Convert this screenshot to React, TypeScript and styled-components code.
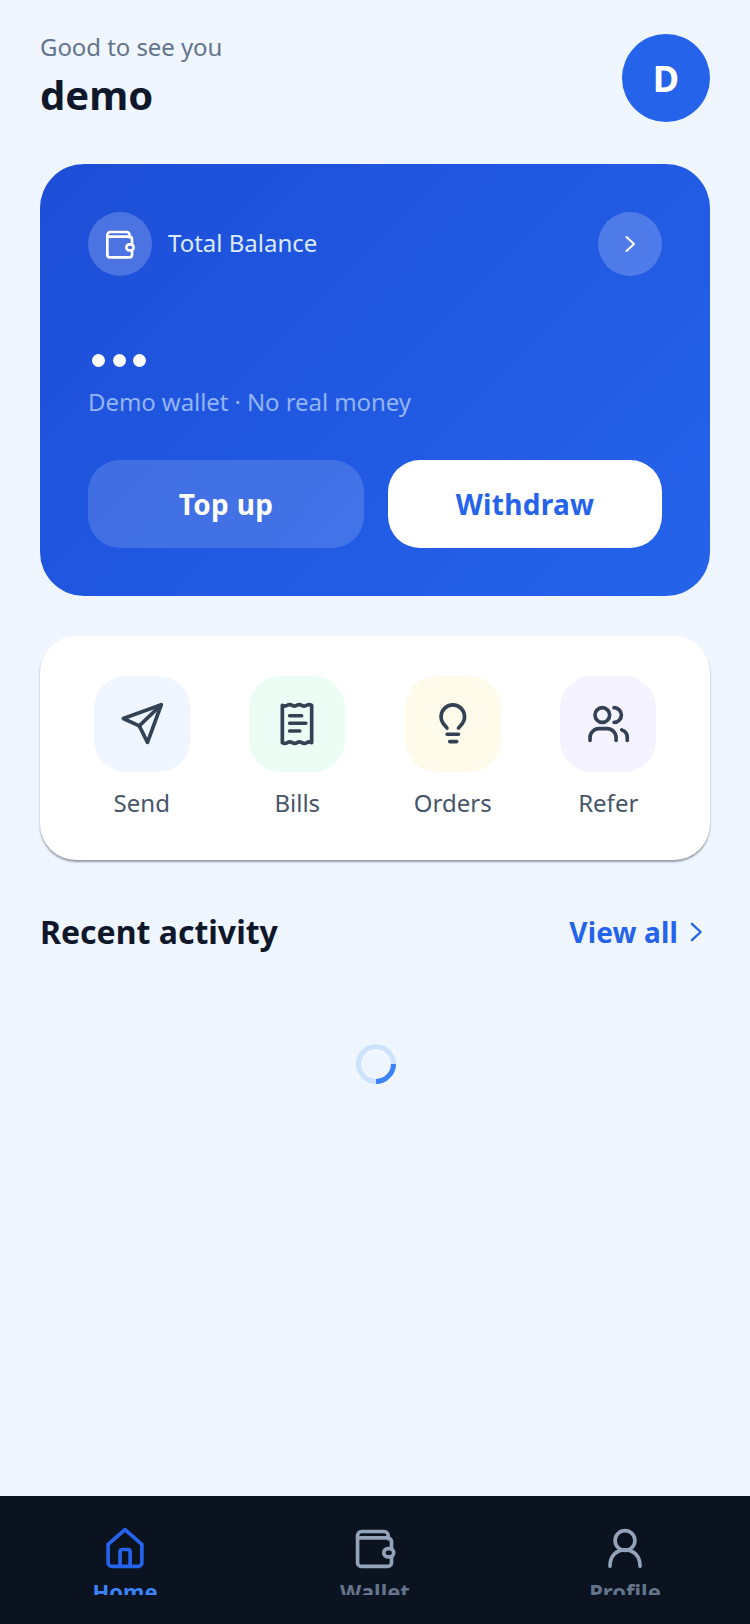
import styled, { createGlobalStyle } from "styled-components";

const GlobalStyle = createGlobalStyle`
  html, body {
    margin: 0;
    padding: 0;
    background: #eff6ff;
  }
  * {
    box-sizing: border-box;
  }
`;

const Page = styled.div`
  width: 750px;
  height: 1624px;
  display: flex;
  flex-direction: column;
  background: #eff6ff;
  font-family: "Noto Sans", "Open Sans", sans-serif;
  overflow: hidden;
`;

const Content = styled.main`
  flex: 1;
  padding: 34px 40px 0;
  display: flex;
  flex-direction: column;
`;

const Header = styled.header`
  display: flex;
  justify-content: space-between;
  align-items: flex-start;
  height: 88px;
`;

const Greeting = styled.div`
  color: #64748b;
  font-size: 24px;
  line-height: 26px;
  letter-spacing: -0.07px;
`;

const UserName = styled.h1`
  margin: 11px 0 0;
  color: #0f172a;
  font-size: 40px;
  line-height: 48px;
  font-weight: 700;
`;

const Avatar = styled.div`
  width: 88px;
  height: 88px;
  border-radius: 50%;
  background: #2563eb;
  color: #fff;
  display: flex;
  align-items: center;
  justify-content: center;
  font-size: 36px;
  font-weight: 700;
`;

const BalanceCard = styled.section`
  margin-top: 42px;
  height: 432px;
  padding: 48px;
  border-radius: 44px;
  background: linear-gradient(135deg, #1d4ed8, #2563eb);
  display: flex;
  flex-direction: column;
`;

const BalanceTop = styled.div`
  display: flex;
  align-items: center;
  justify-content: space-between;
`;

const BalanceLabelRow = styled.div`
  display: flex;
  align-items: center;
  gap: 16px;
`;

const GlassCircle = styled.div`
  width: 64px;
  height: 64px;
  border-radius: 50%;
  background: rgba(255, 255, 255, 0.2);
  color: #fff;
  display: flex;
  align-items: center;
  justify-content: center;
`;

const BalanceLabel = styled.span`
  color: #dbeafe;
  font-size: 24px;
  padding-bottom: 4px;
`;

const Dots = styled.div`
  margin-top: 78px;
  height: 14px;
  display: flex;
  gap: 7.5px;
  padding-left: 4px;
`;

const Dot = styled.span`
  width: 13px;
  height: 13px;
  border-radius: 50%;
  background: #fff;
`;

const BalanceNote = styled.div`
  margin-top: 18px;
  color: #93b4f5;
  font-size: 24px;
  line-height: 32px;
  letter-spacing: -0.08px;
`;

const BalanceActions = styled.div`
  margin-top: 42px;
  display: flex;
  gap: 24px;
`;

const ActionButton = styled.button<{ $solid?: boolean }>`
  flex: ${({ $solid }) => ($solid ? "0 0 274px" : "1")};
  height: 88px;
  border: none;
  border-radius: 32px;
  font-family: inherit;
  font-size: 28px;
  font-weight: 700;
  letter-spacing: 0.3px;
  background: ${({ $solid }) => ($solid ? "#fff" : "rgba(255, 255, 255, 0.15)")};
  color: ${({ $solid }) => ($solid ? "#2563eb" : "#fff")};
`;

const QuickCard = styled.section`
  margin-top: 40px;
  height: 224px;
  padding: 40px 24px 0;
  border-radius: 36px;
  background: #fff;
  box-shadow: 0 2px 2px rgba(15, 23, 42, 0.4);
  display: grid;
  grid-template-columns: repeat(4, 1fr);
`;

const QuickItem = styled.div`
  display: flex;
  flex-direction: column;
  align-items: center;
`;

const QuickTile = styled.div<{ $bg: string }>`
  width: 96px;
  height: 96px;
  border-radius: 32px;
  background: ${({ $bg }) => $bg};
  color: #334155;
  display: flex;
  align-items: center;
  justify-content: center;
`;

const QuickLabel = styled.span`
  margin-top: 14px;
  color: #475569;
  font-size: 24px;
  line-height: 34px;
`;

const SectionHead = styled.div`
  margin-top: 50px;
  display: flex;
  align-items: center;
  justify-content: space-between;
`;

const SectionTitle = styled.h2`
  margin: 0;
  color: #0f172a;
  font-size: 32px;
  line-height: 44px;
  font-weight: 700;
`;

const ViewAll = styled.a`
  display: flex;
  align-items: center;
  gap: 4px;
  color: #2563eb;
  font-size: 28px;
  font-weight: 700;
  letter-spacing: 0.15px;
`;

const SpinnerWrap = styled.div`
  margin-top: 90px;
  padding-left: 2px;
  display: flex;
  justify-content: center;
`;

const Spinner = styled.div`
  width: 40px;
  height: 40px;
  border-radius: 50%;
  border: 5px solid #cfe2fd;
  border-right-color: #3b82f6;
  transform: rotate(45deg);
`;

const BottomNav = styled.nav`
  height: 128px;
  background: #0b1320;
  display: grid;
  grid-template-columns: repeat(3, 1fr);
  padding: 30px 0 0 0;
`;

const NavItem = styled.div<{ $active?: boolean }>`
  display: flex;
  flex-direction: column;
  align-items: center;
  color: ${({ $active }) => ($active ? "#2563eb" : "#94a3b8")};
`;

const NavLabel = styled.div<{ $active?: boolean }>`
  margin-top: 7px;
  height: 18px;
  overflow: hidden;
  color: ${({ $active }) => ($active ? "#3b82f6" : "#64748b")};
  font-size: 22px;
  line-height: 28px;
  font-weight: 700;
`;

type IconProps = { size: number };

const Icon = ({ size, children }: IconProps & { children: React.ReactNode }) => (
  <svg width={size} height={size} viewBox="0 0 24 24" fill="none" stroke="currentColor" strokeWidth={2} strokeLinecap="round" strokeLinejoin="round">
    {children}
  </svg>
);

const WalletIcon = ({ size }: IconProps) => (
  <Icon size={size}>
    <path d="M19.2 7V5.2A2.2 2.2 0 0 0 17 3H4.7a2.2 2.2 0 0 0-2.2 2.2V20a2 2 0 0 0 2 2H19a2 2 0 0 0 2-2v-3.2" />
    <path d="M2.5 6.5H19a2 2 0 0 1 2 2v3.7" />
    <rect x="16.8" y="12.3" width="5.4" height="4.5" rx="2.2" />
  </Icon>
);

const ChevronIcon = ({ size }: IconProps) => (
  <Icon size={size}>
    <path d="M8.5 5l7.5 7-7.5 7" />
  </Icon>
);

const SendIcon = ({ size }: IconProps) => (
  <Icon size={size}>
    <path d="M22.5 1.5L1.8 9l8.7 4 4.5 9 7.5-20.5z" />
    <path d="M22.5 1.5L10.5 13" />
  </Icon>
);

const ReceiptIcon = ({ size }: IconProps) => (
  <Icon size={size}>
    <path d="M4 1.8q1.4.8 2.7 0t2.7 0 2.6 0 2.6 0 2.7 0 2.7 0V22.2q-1.4-.8-2.7 0t-2.7 0-2.6 0-2.6 0-2.7 0-2.7 0V1.8z" />
    <path d="M8 7.5h6.5M8 11.6h8.8M8 15.8h5.5" />
  </Icon>
);

const BulbIcon = ({ size }: IconProps) => (
  <Icon size={size}>
    <path d="M8.7 14.2c-.5-1-3.2-2.6-3.2-6.2a6.4 6.4 0 0 1 12.8 0c0 3.6-2.7 5.2-3.3 6.2" />
    <path d="M8.8 17.6h6.2M10.2 21.6h3.8" />
  </Icon>
);

const UsersIcon = ({ size }: IconProps) => (
  <Icon size={size}>
    <circle cx="8.9" cy="7.1" r="4" />
    <path d="M15.3 3.1a4 4 0 0 1 0 8" />
    <path d="M2.2 21v-1.5a5 5 0 0 1 5-5h4.2a5 5 0 0 1 5 5V21" />
    <path d="M19.5 15.2a4.5 4.5 0 0 1 3 4.3V21" />
  </Icon>
);

const HomeIcon = ({ size }: IconProps) => (
  <Icon size={size}>
    <path d="M12 2l9.2 8V20a2 2 0 0 1-2 2H4.8a2 2 0 0 1-2-2V10L12 2z" />
    <path d="M9.3 22v-8a1.2 1.2 0 0 1 1.2-1.2h3.1a1.2 1.2 0 0 1 1.2 1.2v8" />
  </Icon>
);

const ProfileIcon = ({ size }: IconProps) => (
  <Icon size={size}>
    <circle cx="12" cy="7.9" r="5.4" />
    <path d="M3.8 22c0-5.5 3.3-9 8.2-9s8.2 3.5 8.2 9" />
  </Icon>
);

const quickActions = [
  { label: "Send", bg: "#eff6ff", Glyph: SendIcon },
  { label: "Bills", bg: "#ecfdf5", Glyph: ReceiptIcon },
  { label: "Orders", bg: "#fffbeb", Glyph: BulbIcon },
  { label: "Refer", bg: "#f5f3ff", Glyph: UsersIcon },
];

const App = () => {
  return (
    <Page>
      <GlobalStyle />
      <Content>
        <Header>
          <div>
            <Greeting>Good to see you</Greeting>
            <UserName>demo</UserName>
          </div>
          <Avatar>D</Avatar>
        </Header>

        <BalanceCard>
          <BalanceTop>
            <BalanceLabelRow>
              <GlassCircle>
                <WalletIcon size={32} />
              </GlassCircle>
              <BalanceLabel>Total Balance</BalanceLabel>
            </BalanceLabelRow>
            <GlassCircle>
              <ChevronIcon size={24} />
            </GlassCircle>
          </BalanceTop>
          <Dots>
            <Dot />
            <Dot />
            <Dot />
          </Dots>
          <BalanceNote>Demo wallet · No real money</BalanceNote>
          <BalanceActions>
            <ActionButton>Top up</ActionButton>
            <ActionButton $solid>Withdraw</ActionButton>
          </BalanceActions>
        </BalanceCard>

        <QuickCard>
          {quickActions.map(({ label, bg, Glyph }) => (
            <QuickItem key={label}>
              <QuickTile $bg={bg}>
                <Glyph size={44} />
              </QuickTile>
              <QuickLabel>{label}</QuickLabel>
            </QuickItem>
          ))}
        </QuickCard>

        <SectionHead>
          <SectionTitle>Recent activity</SectionTitle>
          <ViewAll>
            View all
            <ChevronIcon size={28} />
          </ViewAll>
        </SectionHead>

        <SpinnerWrap>
          <Spinner />
        </SpinnerWrap>
      </Content>

      <BottomNav>
        <NavItem $active>
          <HomeIcon size={44} />
          <NavLabel $active>Home</NavLabel>
        </NavItem>
        <NavItem>
          <WalletIcon size={44} />
          <NavLabel>Wallet</NavLabel>
        </NavItem>
        <NavItem>
          <ProfileIcon size={44} />
          <NavLabel>Profile</NavLabel>
        </NavItem>
      </BottomNav>
    </Page>
  );
};

export default App;
